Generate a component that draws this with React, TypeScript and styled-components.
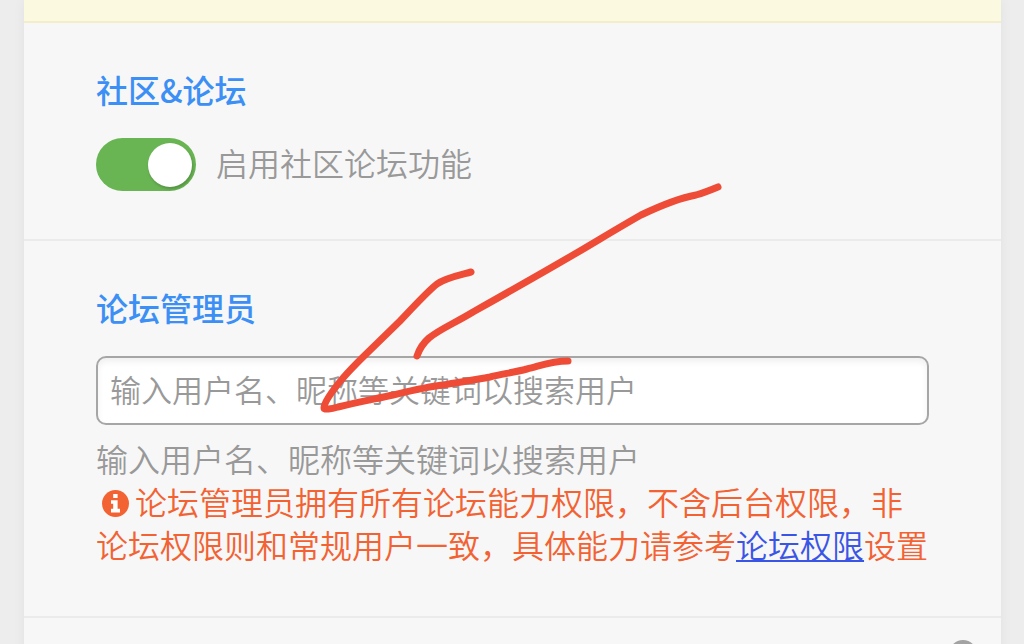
import React from "react";
import styled, { createGlobalStyle } from "styled-components";

const GlobalStyle = createGlobalStyle`
  *, *::before, *::after { box-sizing: border-box; }
  body {
    margin: 0;
    background: #ededed;
    color: #999;
    font-family: "Noto Sans CJK SC", sans-serif;
    font-size: 32px;
    font-weight: 350;
    line-height: 43px;
  }
`;

const Page = styled.main`
  position: relative;
  height: 100vh;
  overflow: hidden;
  padding: 0 23px 0 24px;
`;

const Panel = styled.div`
  min-height: 100%;
  background: #f7f7f7;
  box-shadow: 0 0 12px rgba(0, 0, 0, 0.05);
`;

const Notice = styled.div`
  height: 23px;
  background: #fbfae0;
  border-bottom: 2px solid #f4edcb;
`;

const Section = styled.section`
  padding: 45px 72px 48px;
  border-bottom: 2px solid #ebebeb;
`;

const Title = styled.h2`
  margin: 0 0 27px;
  color: #3b8ff5;
  font-size: 32px;
  font-weight: 500;
  line-height: 43px;
`;

const SwitchRow = styled.label`
  display: flex;
  align-items: center;
  gap: 20px;
`;

const Switch = styled.input`
  appearance: none;
  flex: none;
  display: flex;
  align-items: center;
  width: 100px;
  height: 53px;
  margin: 0;
  padding: 0 4px;
  border-radius: 27px;
  background: #ccc;

  &::before {
    content: "";
    width: 44px;
    height: 44px;
    border-radius: 50%;
    background: #fff;
    box-shadow: 1px 2px 3px rgba(0, 0, 0, 0.2);
  }

  &:checked {
    justify-content: flex-end;
    background: #69b553;
  }
`;

const SwitchText = styled.span`
  padding-bottom: 4px;
`;

const Search = styled.input`
  display: block;
  width: 100%;
  height: 69px;
  margin: 0 0 12px;
  padding: 0 12px 4px;
  border: 2px solid #a6a6a6;
  border-radius: 10px;
  background: #fff;
  box-shadow: inset 0 4px 6px rgba(0, 0, 0, 0.06);
  color: #555;
  font: inherit;
  font-size: 31px;

  &::placeholder {
    color: #999;
    opacity: 1;
  }
`;

const Hint = styled.p`
  margin: 0;
`;

const Warning = styled.p`
  margin: 0 0 2px;
  color: #f26232;
`;

const InfoIcon = styled.svg`
  width: 27px;
  height: 27px;
  margin: 0 6px;
  vertical-align: -2px;
`;

const Link = styled.a`
  color: #3a55e6;
  text-decoration: underline;
  text-decoration-thickness: 2px;
  text-underline-offset: 2px;
  text-decoration-skip-ink: none;
`;

const Footer = styled.section`
  display: flex;
  justify-content: flex-end;
  padding: 22px 24px;
`;

const RoundButton = styled.button`
  width: 28px;
  height: 28px;
  padding: 0;
  border: 0;
  border-radius: 50%;
  background: #a3a3a3;
`;

const Sketch = styled.svg`
  position: absolute;
  top: 180px;
  left: 314px;
  pointer-events: none;
`;

export default function App() {
  return (
    <>
      <GlobalStyle />
      <Page>
        <Panel>
          <Notice />
          <Section>
            <Title>社区&amp;论坛</Title>
            <SwitchRow>
              <Switch type="checkbox" defaultChecked />
              <SwitchText>启用社区论坛功能</SwitchText>
            </SwitchRow>
          </Section>
          <Section>
            <Title id="admins">论坛管理员</Title>
            <Search
              type="text"
              aria-labelledby="admins"
              placeholder="输入用户名、昵称等关键词以搜索用户"
            />
            <Hint>输入用户名、昵称等关键词以搜索用户</Hint>
            <Warning>
              <InfoIcon viewBox="0 0 27 27" aria-hidden>
                <circle cx="13.5" cy="13.5" r="13.5" fill="currentColor" />
                <path
                  d="M11.2 4h4.4v4h-4.4zM9 10.2h6.6v8.6H18v3.6H9v-3.6h2.2v-5H9z"
                  fill="#fff"
                />
              </InfoIcon>
              论坛管理员拥有所有论坛能力权限，不含后台权限，非论坛权限则和常规用户一致，具体能力请参考
              <Link href="#permissions">论坛权限</Link>设置
            </Warning>
          </Section>
          <Footer>
            <RoundButton type="button" aria-label="回到顶部" />
          </Footer>
        </Panel>
        <Sketch
          width="410"
          height="236"
          viewBox="314 180 410 236"
          fill="none"
          stroke="#ee4c37"
          strokeWidth="7"
          strokeLinecap="round"
          strokeLinejoin="round"
          aria-hidden
        >
          <path d="M718 187C706 192 703 193 696 195C680 198 662 205 641 215C618 228 592 244 573 255C537 276 505 294 473 312C455 323 440 329 429 338C422 344 419 350 417 356" />
          <path d="M471 272C460 275 445 278 437 284C429 290 418 302 400 321L362 358C356 364 349 371 343 378C333 390 324 403 324 408C324 410 331 409 338 407C358 402 375 399 393 395C410 391 426 387 443 385C460 382 475 380 490 377C503 374 515 372 527 369C540 366 551 361 568 361" />
        </Sketch>
      </Page>
    </>
  );
}
